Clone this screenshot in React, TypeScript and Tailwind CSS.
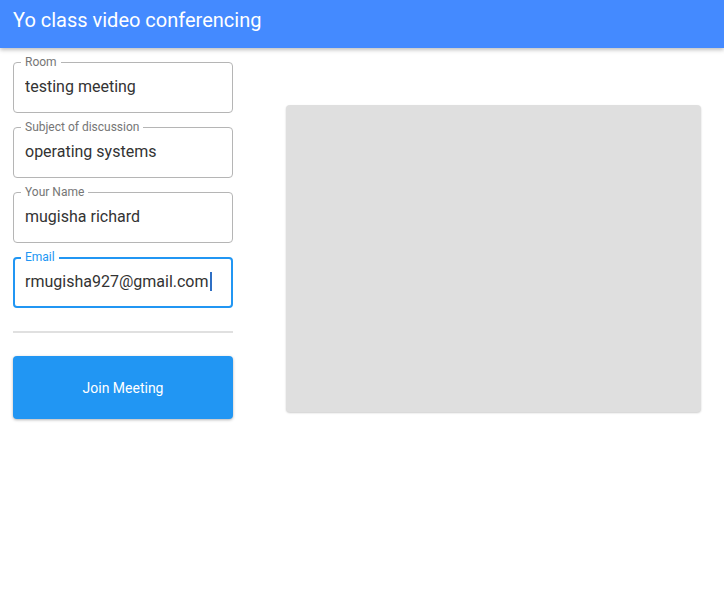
import React from 'react';

const fields = [
  { label: 'Room', value: 'testing meeting' },
  { label: 'Subject of discussion', value: 'operating systems' },
  { label: 'Your Name', value: 'mugisha richard' },
];

const Field = ({ label, value }: { label: string; value: string }) => (
  <div className="relative h-[51px] rounded-[4px] border border-[#b5b5b5]">
    <span className="absolute left-[7px] -top-[8px] bg-white px-[4px] text-[12px] leading-[14px] text-[#767676]">{label}</span>
    <input
      readOnly
      defaultValue={value}
      className="h-full w-full bg-transparent px-[11px] pb-[2px] text-[16px] text-[#333333] outline-none"
    />
  </div>
);

export default function App() {
  return (
    <div className="min-h-[605px] bg-white font-['Roboto','Liberation_Sans',sans-serif]">
      <header className="h-12 bg-[#448aff] px-[13px] pt-[8px] shadow-[0_2px_4px_rgba(0,0,0,0.25)]">
        <h1 className="text-[20px] leading-[24px] font-normal text-white">Yo class video conferencing</h1>
      </header>

      <main className="flex gap-[53px] pl-[13px] pt-[14px]">
        <div className="flex w-[220px] flex-col">
          <div className="flex flex-col gap-[14px]">
            {fields.map(f => (
              <Field key={f.label} label={f.label} value={f.value} />
            ))}
            {/* focused field */}
            <div className="relative flex h-[51px] items-center rounded-[4px] border-2 border-[#2196f3] px-[10px] pb-[2px]">
              <span className="absolute left-[6px] -top-[9px] bg-white px-[4px] text-[12px] leading-[14px] text-[#2196f3]">Email</span>
              <span className="text-[16px] text-[#333333]">rmugisha927@gmail.com</span>
              <span className="ml-px h-[19px] w-[2px] bg-[#2f6fc4]" />
            </div>
          </div>

          <div className="mt-[23px] h-[2px] bg-[#e0e0e0]" />

          <button className="mt-[23px] h-[63px] rounded-[4px] bg-[#2196f3] pt-[2px] text-[14px] text-white shadow-[0_1px_3px_rgba(0,0,0,0.3)]">
            Join Meeting
          </button>
        </div>

        <div className="mt-[43px] h-[307px] w-[415px] rounded-[4px] bg-[#dfdfdf] shadow-[0_1px_2px_rgba(0,0,0,0.2)]" />
      </main>
    </div>
  );
}
